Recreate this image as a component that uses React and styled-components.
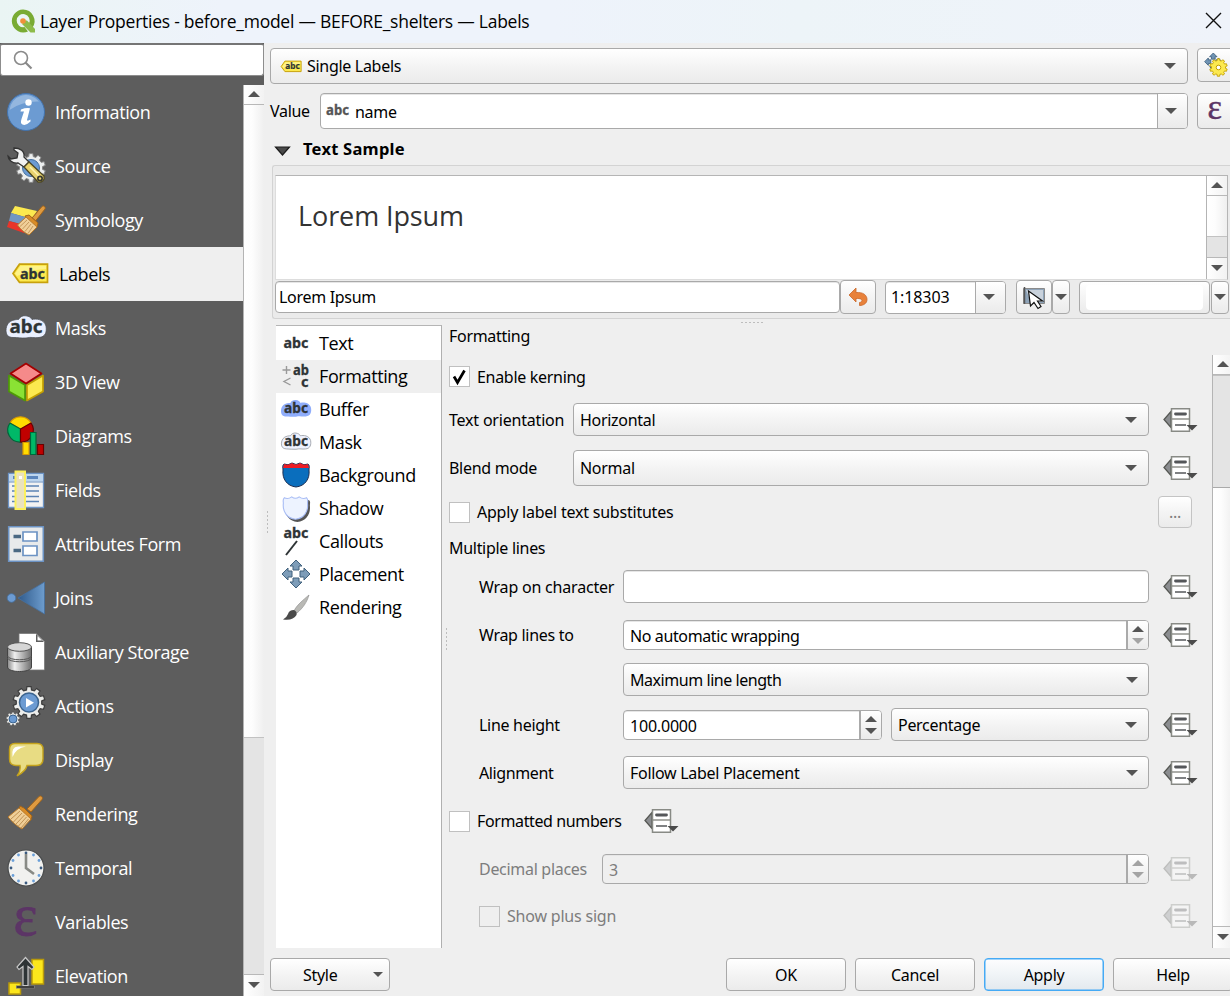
import React from "react";
import styled, { createGlobalStyle } from "styled-components";

const Global = createGlobalStyle`
  * { box-sizing: border-box; }
  html, body { margin: 0; width: 1230px; height: 996px; overflow: hidden; background: #efefef; }
  svg { display: block; flex: none; overflow: visible; }
`;

const ui = `"Noto Sans", "Open Sans", sans-serif`;
const segoe = `"Open Sans", "Noto Sans", sans-serif`;
const face = "linear-gradient(#ffffff, #f4f4f4 50%, #ebebeb)";

const Window = styled.div`
  width: 1230px;
  height: 996px;
  display: flex;
  flex-direction: column;
  overflow: hidden;
  background: #efefef;
  color: #000;
  font: 16px/20px ${ui};
  letter-spacing: -0.3px;
  white-space: nowrap;
`;
const TitleBar = styled.header`
  height: 43px;
  flex: none;
  display: flex;
  align-items: center;
  padding: 0 8px 2px 11px;
  background: linear-gradient(90deg, #eaf5f4 0, #eef3fb 18%, #eef3fb 45%, #edf4f8 65%, #eff3fa 100%);
  font-family: ${segoe};
  font-size: 17.5px;
  letter-spacing: -0.25px;
`;
const Title = styled.h1`
  margin: 0 auto 0 5px;
  font: inherit;
`;
const Body = styled.div`
  flex: 1;
  min-height: 0;
  display: flex;
`;

/* ---- sidebar ---- */
const Sidebar = styled.aside`
  width: 264px;
  flex: none;
  display: flex;
  flex-direction: column;
  background: #5d5d5d;
`;
const Search = styled.div`
  height: 33px;
  flex: none;
  margin: 0 0 9px;
  padding: 5px 12px;
  background: #fff;
  border: 1px solid #8d8d8d;
  border-top: 2px solid #757575;
  border-radius: 3px;
`;
const SideBody = styled.div`
  flex: 1;
  min-height: 0;
  display: flex;
`;
const NavList = styled.nav`
  width: 243px;
  overflow: hidden;
`;
const NavItem = styled.div`
  height: 54px;
  display: flex;
  align-items: center;
  gap: 9px;
  padding: 0 0 0 ${(p) => (p.$active ? 9 : 6)}px;
  background: ${(p) => (p.$active ? "#efefef" : "none")};
  color: ${(p) => (p.$active ? "#000" : "#fff")};
  font-family: ${segoe};
  font-size: 18px;
  letter-spacing: -0.4px;
`;
const IconBox = styled.span`
  width: ${(p) => p.$w}px;
  display: flex;
  justify-content: center;
  margin-top: ${(p) => p.$up || 0}px;
`;

/* ---- scroll bars ---- */
const Bar = styled.div`
  width: 21px;
  flex: none;
  display: flex;
  flex-direction: column;
  overflow: hidden;
  border-left: 1px solid #b4b4b4;
  background: linear-gradient(90deg, #fff, #fdfdfd 40%, #efefef);
`;
const BarArrow = styled.div`
  height: ${(p) => p.$h || 20}px;
  flex: none;
  display: flex;
  align-items: center;
  justify-content: center;
  padding-bottom: 1px;
  border: 0 solid #b8b8b8;
  border-width: ${(p) => (p.$down ? "1px 0 0" : "0 0 1px")};
  background: linear-gradient(90deg, #fff, #f2f2f2);
`;
const BarSpace = styled.div`
  flex: ${(p) => (p.$h ? "none" : 1)};
  height: ${(p) => (p.$h ? p.$h + "px" : "auto")};
`;
const Thumb = styled.div`
  height: ${(p) => p.$h}px;
  flex: none;
  background: #e4e4e4;
  border-top: 1px solid #c2c2c2;
  border-bottom: ${(p) => (p.$end ? "1px solid #aaa" : "0")};
`;

/* ---- controls ---- */
const Main = styled.main`
  flex: 1;
  min-width: 0;
  display: flex;
  flex-direction: column;
  padding: 5px 0 0 6px;
`;
const Line = styled.div`
  flex: none;
  display: flex;
  align-items: ${(p) => p.$align || "center"};
  height: ${(p) => p.$h}px;
  margin-top: ${(p) => p.$mt || 0}px;
  padding-left: ${(p) => p.$pl || 0}px;
  color: ${(p) => (p.$off ? "#7d7d7d" : "inherit")};
`;
const Frame = styled.div`
  flex: none;
  width: ${(p) => p.$w}px;
  height: ${(p) => p.$h || 33}px;
  margin-left: ${(p) => p.$ml || 0}px;
  display: flex;
  align-items: center;
  border: 1px solid ${(p) => (p.$soft ? "#c4c4c4" : "#a9a9a9")};
  border-radius: 4px;
  overflow: hidden;
`;
const Button = styled(Frame)`
  justify-content: ${(p) => p.$justify || "center"};
  padding: ${(p) => p.$pad || "0"};
  color: ${(p) => (p.$soft ? "#7d7d7d" : "inherit")};
  background: ${(p) => (p.$primary ? "linear-gradient(#fdfdfe, #f0f4f7 50%, #e3e9ee)" : face)};
  ${(p) => p.$primary && "border: 1px solid #45aaf5; box-shadow: inset 0 0 0 0.5px #45aaf5;"}
`;
const Combo = styled(Frame)`
  justify-content: space-between;
  padding: 0 ${(p) => p.$pr || 11}px 0 6px;
  background: ${face};
`;
const Field = styled(Frame)`
  padding-left: ${(p) => (p.$pl === undefined ? 6 : p.$pl)}px;
  background: ${(p) => (p.$off ? "#efefef" : "#fff")};
  box-shadow: inset 0 1px 0 #e6e6e6;
`;
const FieldText = styled.span`
  flex: 1;
  display: flex;
  align-items: center;
  gap: 5px;
  padding-top: ${(p) => p.$drop || 0}px;
  letter-spacing: ${(p) => (p.$ls !== undefined ? p.$ls + "px" : "inherit")};
`;
const FieldButton = styled.span`
  width: ${(p) => p.$w}px;
  align-self: stretch;
  display: flex;
  flex-direction: column;
  gap: 6px;
  align-items: center;
  justify-content: center;
  border-left: ${(p) => p.$line || 1}px solid #aaa;
  padding-right: ${(p) => (p.$line ? 0 : 3)}px;
  background: ${face};
`;
const Label = styled.span`
  width: ${(p) => (p.$w ? p.$w + "px" : "auto")};
  flex: none;
  letter-spacing: ${(p) => (p.$ls !== undefined ? p.$ls + "px" : "inherit")};
`;
const Box = styled.span`
  width: 21px;
  height: 21px;
  flex: none;
  margin-right: 7px;
  display: flex;
  align-items: center;
  justify-content: center;
  background: ${(p) => (p.$off ? "#efefef" : "#fff")};
  border: 1.5px solid #c0c0c0;
`;
const Heading = styled.h2`
  margin: 0 0 0 12px;
  font: bold 16.5px/20px ${ui};
  letter-spacing: 0.25px;
`;
const Sample = styled.section`
  flex: none;
  height: 154px;
  margin: 3px 0 0 2px;
  padding: 9px 0 0 2px;
  background: #ebebeb;
  border: 1px solid #d3d3d3;
  border-right: 0;
  border-radius: 3px 0 0 3px;
`;
const Preview = styled.div`
  height: 105px;
  width: 953px;
  display: flex;
  background: #fff;
  border: 1px solid #b5b5b5;
  border-bottom-color: #ddd;
  border-left-color: #ddd;
`;
const PreviewText = styled.div`
  flex: 1;
  padding: 20px 0 0 22px;
  font: 27px/40px ${segoe};
  letter-spacing: -0.1px;
  color: #333;
`;
const Swatch = styled.span`
  width: 117px;
  height: 25px;
  border-radius: 4px;
  background: #fff;
`;
const Split = styled.div`
  flex: none;
  height: 623px;
  margin-top: 6px;
  display: flex;
`;
const TabList = styled.div`
  width: 166px;
  margin-left: 6px;
  flex: none;
  padding-top: 1px;
  background: #fff;
  border-top: 1px solid #b5b5b5;
  border-right: 1px solid #b0b0b0;
`;
const Tab = styled.div`
  height: 33px;
  display: flex;
  align-items: center;
  gap: 8px;
  padding: 0 0 2px 5px;
  font-family: ${segoe};
  font-size: 18px;
  letter-spacing: -0.4px;
  background: ${(p) => (p.$active ? "#efefef" : "none")};
`;
const Form = styled.div`
  width: 764px;
  padding-left: 7px;
  margin-right: 6px;
  flex: none;
`;
const ScrollSlot = styled.div`
  flex: 1;
  padding-top: 30px;
  display: flex;
`;
const Override = styled.span`
  margin-left: ${(p) => (p.$ml === undefined ? 14 : p.$ml)}px;
  opacity: ${(p) => (p.$off ? 0.32 : 1)};
`;
const Footer = styled.footer`
  display: flex;
  gap: 9px;
  margin-top: 10px;
`;
const Push = styled.span`
  flex: none;
  width: 318px;
`;
const IconGap = styled.span`
  margin-left: 3px;
`;
const Dots = styled.div`
  width: ${(p) => (p.$row ? 25 : 3)}px;
  height: ${(p) => (p.$row ? 3 : 25)}px;
  background: radial-gradient(circle, #bdbdbd 0.8px, transparent 1px) 0 0 / ${(p) => (p.$row ? "4px 3px" : "3px 4px")};
`;
const Grip = styled.div`
  position: absolute;
  left: ${(p) => p.$x}px;
  top: ${(p) => p.$y}px;
`;

/* ---- glyphs ---- */
const Tri = ({ up, dim, w = 12 }) => (
  <svg width={w} height={w / 2} viewBox="0 0 12 6">
    <path d={up ? "M0 6 6 0 12 6Z" : "M0 0H12L6 6Z"} fill={dim ? "#a3a3a3" : "#545454"} />
  </svg>
);

const Abc = ({ x, y, size = 15, fill = "#2e3436", children = "abc", ...r }) => (
  <text x={x} y={y} fontFamily="Noto Sans, sans-serif" fontWeight="700" fontSize={size} fill={fill} stroke={fill} strokeWidth=".3" letterSpacing="0" {...r}>{children}</text>
);

const Gear = ({ cx, cy, r, n = 8, fill, stroke, sw = 1 }) => {
  const pts = [];
  for (let i = 0; i < n; i++) {
    const a = (i / n) * Math.PI * 2 - Math.PI / 2;
    const s = Math.PI / n;
    [[-0.62, 0.8], [-0.42, 1], [0.42, 1], [0.62, 0.8]].forEach(([k, m]) =>
      pts.push(`${(cx + Math.cos(a + s * k) * r * m).toFixed(2)},${(cy + Math.sin(a + s * k) * r * m).toFixed(2)}`)
    );
  }
  return <polygon points={pts.join(" ")} fill={fill} stroke={stroke} strokeWidth={sw} />;
};

const cloud = "M7 22.500C2 22.500 0 19.500 0 15.500C0 10 3 6 8 5C10 4.500 11.500 4.500 12.500 4.500C14 1.500 17 .3 20 .8C23 1.200 25 2.500 26 4.500C30 3.500 38 4 40 11C41 17 39.500 22 33 22.500C28 23.300 26 21.500 20 23C15 23.300 12 22.500 7 22.500Z";
const brushHandle = "M21 15 33 2.500C35 1 37.500 3.500 36 5.500L25 18Z";

const Brush = () => (
  <g>
    <path d={brushHandle} fill="#df9a40" stroke="#a0641a" />
    <path d="M14 12 18 14 26 22 25 26 20 28 11 19Z" fill="#d98c27" stroke="#a0641a" />
    <path d="M13 14 2 23C6 28 11 32 16 35L25 25Z" fill="#f0cf98" stroke="#b97b2c" />
    <path d="M14 17 5 25M16 19 7.500 28M18.500 21 10 30M20.500 23 12.500 32M22.500 25 15 34" stroke="#b98a4c" strokeWidth=".9" />
  </g>
);

const icons = {
  info: (
    <g>
      <circle cx="20" cy="20" r="18.500" fill="#6c9bd2" stroke="#4373ad" />
      <path d="M3.500 18A16.500 16.500 0 0 1 33 9.500Q16 9 3.500 18Z" fill="#a5c3e4" opacity=".7" />
      <circle cx="22.500" cy="10.500" r="3.200" fill="#fff" />
      <path d="M15 17.500Q20 15.500 24 16.200L21 28Q21.500 29.500 24.500 27.500L24.500 29.500Q20 34 16.500 32.500Q14 31.500 15.500 27L18 19.500L14.500 19.500Z" fill="#fff" />
    </g>
  ),
  source: (
    <g>
      <Gear cx={25} cy={22} r={14.500} n={10} fill="#eceeee" stroke="#888" />
      <circle cx="25" cy="22" r="8.500" fill="#6c9bd2" stroke="#45709f" />
      <path d="M2 10C2 13 6 18 12 17L18 21 23 16 18 11C19 5 14 2 8 2L8 4 12 7 11 12 5 13 2 10Z" fill="#f0f1f1" stroke="#333" strokeWidth="1.300" />
      <path d="M18 21 23 16 38 30C39 34 36 37 32 36Z" fill="#e9d36e" stroke="#4b4521" strokeWidth="1.300" />
      <path d="M24 21 34 31" stroke="#fff3b0" strokeWidth="1.500" />
      <circle cx="34" cy="32.500" r="3" fill="#3b3b30" /><circle cx="34" cy="32.500" r="1.200" fill="#e9d36e" />
    </g>
  ),
  symbology: (
    <g>
      <path d="M9 6 31 11 26 19 5 13Z" fill="#fce94f" />
      <path d="M5 13 26 19 22 26 3 21Z" fill="#7296c3" />
      <path d="M3 21 22 26 18 33 1 27Z" fill="#e8352b" />
      <g transform="translate(11 4)">
        <path d="M15 14 25 2.500C26.500 1 29 3 28 5L18.500 17Z" fill="#df9a40" stroke="#a0641a" />
        <path d="M8 12 12 11 21 19 20 23 14 27Z" fill="#d98c27" stroke="#a0641a" />
        <path d="M9 13 .5 21C4 26 8 29 12 31L20 23Z" fill="#f0cf98" stroke="#b97b2c" />
        <path d="M10 16 3 22.500M12 18 5.500 25M14 20 8 27.500M16 22 11 29.500" stroke="#b98a4c" strokeWidth=".8" />
      </g>
    </g>
  ),
  masks: (
    <g>
      <path d={cloud} transform="translate(0 7)" fill="#eaf0ff" stroke="#4c5055" strokeWidth=".8" />
      <Abc x="3.500" y="25" size="17.500" textLength="33" lengthAdjust="spacingAndGlyphs" />
    </g>
  ),
  cube: (
    <g strokeWidth="1.700" strokeLinejoin="round">
      <path d="M3 13.500 19 23V38.500L3 29.500Z" fill="#8ae234" stroke="#4e9a06" />
      <path d="M37 13.500 21 23V38.500L37 29.500Z" fill="#fce94f" stroke="#c4a000" />
      <path d="M20 1.500 35.500 11.500 20 21.500 4.500 11.500Z" fill="#f58a8a" stroke="#a40000" />
    </g>
  ),
  diagrams: (
    <g strokeWidth="1.200">
      <path d="M14.500 13 25 7A12 12 0 0 0 4 7Z" fill="#ffdc00" stroke="#d99a00" />
      <path d="M14.500 13V26A12 12 0 0 1 4 7Z" fill="#00b868" stroke="#00673a" />
      <path d="M14.500 13V26A12 12 0 0 0 25 7Z" fill="#c00000" stroke="#6a0000" />
      <path d="M17 26.500H23V38.500H17Z" fill="#ffdc00" stroke="#d99a00" />
      <path d="M24.500 16.500H30V38.500H24.500Z" fill="#00b868" stroke="#00673a" />
      <path d="M31.500 28.500H37.500V38.500H31.500Z" fill="#c00000" stroke="#6a0000" />
    </g>
  ),
  fields: (
    <g>
      <path d="M2.500 3.500H37.500V37.500H2.500Z" fill="#f2f2f2" stroke="#6c93c4" strokeWidth="1.300" />
      <path d="M3 4H37V11.500H3Z" fill="#bcd5ee" /><path d="M3 12H37" stroke="#6c93c4" />
      <path d="M21 7.500H32M7 7.500H9" stroke="#5b86bd" strokeWidth="3" />
      <path d="M6 16H33M6 21H33M6 26.500H33M6 31.500H33" stroke="#5b83b4" strokeWidth="1.500" />
      <path d="M9.500 1.500H19V39H9.500Z" fill="#eae2bd" stroke="#fcf15c" strokeWidth="2" />
      <path d="M13 6H16V9H13Z" fill="#fff" />
    </g>
  ),
  form: (
    <g>
      <path d="M2.700 2.700H37.300V37.300H2.700Z" fill="#e8eaeb" stroke="#6c93c4" strokeWidth="1.600" />
      <path d="M17 8H31V17H17ZM17 22H31V31.500H17Z" fill="#fff" stroke="#6c93c4" strokeWidth="1.700" />
      <path d="M7.500 12.500H15M7.500 26.500H15" stroke="#4b6983" strokeWidth="3.500" />
    </g>
  ),
  joins: (
    <g>
      <defs><linearGradient id="jn"><stop offset="0" stopColor="#2f5a8b" /><stop offset="1" stopColor="#6d9ccd" /></linearGradient></defs>
      <circle cx="5.500" cy="20" r="4.300" fill="#6c9bd2" stroke="#45709f" strokeWidth=".8" />
      <path d="M12 20 38.500 4V36Z" fill="url(#jn)" stroke="#45709f" strokeWidth=".8" />
    </g>
  ),
  storage: (
    <g>
      <defs><linearGradient id="cyl"><stop offset="0" stopColor="#888" /><stop offset=".3" stopColor="#f0f0f0" /><stop offset="1" stopColor="#6e6e6e" /></linearGradient></defs>
      <path d="M13 1.500H30L38.500 9.500V38H13Z" fill="#fff" stroke="#777" strokeWidth=".8" />
      <path d="M30 2V10H38Z" fill="#5d5d5d" /><path d="M31.500 4V8.500H36Z" fill="#fff" />
      <path d="M1.500 15V35C1.500 41 25.500 41 25.500 35V15Z" fill="url(#cyl)" stroke="#444" />
      <ellipse cx="13.500" cy="15" rx="12" ry="4.300" fill="#d6d6d6" stroke="#555" />
      <path d="M1.500 24C3 29 24 29 25.500 24M1.500 26C3 31 24 31 25.500 26" fill="none" stroke="#555" />
    </g>
  ),
  actions: (
    <g>
      <Gear cx={23} cy={16.500} r={16} n={10} fill="#ecedeb" stroke="#3c3c3c" sw="1.200" />
      <circle cx="23" cy="16.500" r="9.500" fill="#6c9bd2" stroke="#3b648f" strokeWidth="1.500" />
      <path d="M20 12 28 16.700 20 21.500Z" fill="#fff" />
      <Gear cx={7} cy={33} r={7} n={9} fill="#ecedeb" stroke="#555" sw=".7" />
      <circle cx="7" cy="33" r="4" fill="#6c9bd2" stroke="#3b648f" />
    </g>
  ),
  display: (
    <g>
      <path d="M9 3.500H31Q37 3.500 37 9.500V19Q37 25.500 30 25.500H21Q20 31 11 36Q15 31 14 25.500H10Q3.500 25.500 3.500 19V9Q3.500 3.500 9 3.500Z" fill="#e8dc83" stroke="#c4a21c" strokeWidth="1.400" />
      <path d="M6.500 17Q5 6.500 12 6.500H20Q10 8 6.500 17Z" fill="#fff" />
    </g>
  ),
  render: <Brush />,
  temporal: (
    <g>
      <circle cx="20" cy="20" r="18" fill="#f1f1ef" stroke="#4b4d4e" strokeWidth="1.200" />
      {[...Array(12)].map((_, i) => (
        <circle key={i} cx={20 + 15 * Math.sin((i * Math.PI) / 6)} cy={20 - 15 * Math.cos((i * Math.PI) / 6)} r="1.400" fill={i % 3 ? "#6a9fd8" : "#3a5a80"} />
      ))}
      <path d="M20 6V20L28 26" fill="none" stroke="#888a85" strokeWidth="2.600" />
    </g>
  ),
  epsilon: (
    <text x="7.500" y="33" fontFamily="Liberation Serif, serif" fontSize="60" fill="#5c3566" stroke="#5c3566" strokeWidth=".8" letterSpacing="0" textLength="24" lengthAdjust="spacingAndGlyphs">ε</text>
  ),
  elevation: (
    <g>
      <path d="M26 3.500H37.500V28H26ZM3 27H14.500V38H3Z" fill="#fce61c" stroke="#b99a0a" strokeWidth="1.500" />
      <path d="M10 31H29" stroke="#777" strokeWidth="3" /><path d="M11 31H28" stroke="#222" strokeWidth="1.300" />
      <path d="M19.500 1.500 11 11 13 13.500 17 10.500V29.500H22V10.500L26 13.500 28 11Z" fill="#2e3436" stroke="#c8c8c8" strokeWidth="1.200" />
    </g>
  ),
};

const TagIcon = ({ w = 38, h = 21 }) => (
  <svg width={w} height={h} viewBox="0 0 38 21">
    <path d="M2 10.500 8.500 1.200H36.500V19.300H8.500Z" fill="#fce94f" stroke="#c8a10c" strokeWidth="1.700" />
    <path d="M4 10.500 9.500 3H35V6Q18 7 6 13Z" fill="#fff6a0" opacity=".7" />
    <Abc x="9" y="15.500" size="14.500" textLength="25" lengthAdjust="spacingAndGlyphs" />
  </svg>
);

const move = "M15 0 21 6H18V10H12V6H9ZM15 28 9 22H12V18H18V22H21ZM1 14 7 8V11H11V17H7V20ZM29 14 23 20V17H19V11H23V8Z";
const shield = "M2 9C2 6 1 5 3 3Q7 5 11 2Q15 5 19 2Q23 5 27 3C29 5 28 6 28 9C29 18 24 25 15 26C6 25 1 18 2 9Z";

const tabs = {
  Text: <Abc x="2.500" y="19" size="15" textLength="25" lengthAdjust="spacingAndGlyphs" />,
  Formatting: (
    <g>
      <Abc x="12" y="12.500" size="14.500" textLength="16" lengthAdjust="spacingAndGlyphs">ab</Abc>
      <Abc x="20" y="24.500" size="14.500">c</Abc>
      <path d="M1.500 8H9.500M5.500 4V12M9.500 16 3 19.500 9.500 23" stroke="#999" strokeWidth="1.400" fill="none" />
    </g>
  ),
  Buffer: (
    <g>
      <path d={cloud} transform="translate(0 4.500) scale(.75 .75)" fill="#8fadfb" />
      <Abc x="3" y="18" size="13.500" textLength="24" lengthAdjust="spacingAndGlyphs" />
    </g>
  ),
  Mask: (
    <g>
      <path d={cloud} transform="translate(.4 4.500) scale(.73 .73)" fill="#eef2ff" stroke="#8b8f96" />
      <Abc x="3" y="18" size="13.500" textLength="24" lengthAdjust="spacingAndGlyphs" />
    </g>
  ),
  Background: (
    <g>
      <path d={shield} fill="#0a6ebd" stroke="#1c2d50" />
      <path d="M3 3Q7 5 11 2Q15 5 19 2Q23 5 27 3L28 7H2Z" fill="#ee1c24" />
    </g>
  ),
  Shadow: (
    <g>
      <path d={shield} transform="translate(2 3) scale(.96)" fill="#555" />
      <path d={shield} transform="translate(.5 1) scale(.93)" fill="#edf3ff" stroke="#a9bdf5" strokeWidth="1.200" />
    </g>
  ),
  Callouts: (
    <g>
      <Abc x="2.500" y="11" size="15" textLength="25" lengthAdjust="spacingAndGlyphs" />
      <path d="M5 28 16 14" stroke="#2e3436" strokeWidth="2" />
    </g>
  ),
  Placement: <path d={move} fill="#7d9cb8" stroke="#41617d" />,
  Rendering: (
    <g>
      <path d="M28 2C22 7 15 13 13 18L16 20C22 15 26 9 28 2Z" fill="#b9b9b5" stroke="#888" strokeWidth=".6" />
      <path d="M13 17Q8 17 7 21Q5.500 25 2 26.500Q12 28 15.500 22Q16.500 19 13 17Z" fill="#4a4a4a" />
    </g>
  ),
};

const OverrideIcon = () => (
  <svg width="35" height="26" viewBox="0 0 35 26">
    <path d="M8 4.500V20.500L1 12.500Z" fill="#8b8d90" stroke="#555753" strokeWidth="1.300" />
    <path d="M8.500 1.700H26.500V24.300H8.500Z" fill="#fff" stroke="#888a85" strokeWidth="1.500" />
    <path d="M8.500 12H26.500" stroke="#888a85" strokeWidth="1.400" />
    <path d="M12.500 7H22.500" stroke="#55575a" strokeWidth="2.800" strokeLinecap="round" />
    <path d="M12 18H23" stroke="#55575a" strokeWidth="1.500" />
    <path d="M23.500 18H34.500L29 23.500Z" fill="#4b4b4b" />
  </svg>
);

const nav = [
  ["info", "Information"],
  ["source", "Source"],
  ["symbology", "Symbology"],
  [null, "Labels"],
  ["masks", "Masks"],
  ["cube", "3D View"],
  ["diagrams", "Diagrams"],
  ["fields", "Fields"],
  ["form", "Attributes Form"],
  ["joins", "Joins"],
  ["storage", "Auxiliary Storage"],
  ["actions", "Actions"],
  ["display", "Display"],
  ["render", "Rendering"],
  ["temporal", "Temporal"],
  ["epsilon", "Variables"],
  ["elevation", "Elevation"],
];

const DD = (p) => (
  <Override $off={p.off} $ml={p.ml}><OverrideIcon /></Override>
);
const Select = ({ w, h, ml, pr, children }) => (
  <Combo $w={w} $h={h} $ml={ml} $pr={pr}>{children}<Tri /></Combo>
);
const Spin = ({ w, off, dimDown, ls, children }) => (
  <Field $w={w} $h={30} $off={off}>
    <FieldText $ls={ls} $drop={2}>{children}</FieldText>
    <FieldButton $w={22} $line={2}><Tri up dim={off} /><Tri dim={off || dimDown} /></FieldButton>
  </Field>
);

export default function App() {
  return (
    <Window>
      <Global />
      <TitleBar>
        <svg width="24" height="24" viewBox="0 0 24 24">
          <path d="M12 .5A11.500 11.500 0 1 0 17 22.500L13.500 18A6.500 6.500 0 1 1 18 14.500L21.500 18.500A11.500 11.500 0 0 0 12 .5Z" fill="#79ab34" />
          <path d="M11.500 11.500H16L24 20V23.500H19.500L11.500 15.500Z" fill="#8dbb4a" />
          <circle cx="12" cy="12" r="2.800" fill="#f0913a" />
        </svg>
        <Title>Layer Properties - before_model — BEFORE_shelters — Labels</Title>
        <svg width="17" height="17" viewBox="0 0 17 17"><path d="M1 1 16 16M16 1 1 16" stroke="#111" strokeWidth="1.400" /></svg>
      </TitleBar>
      <Body>
        <Sidebar>
          <Search>
            <svg width="20" height="20" viewBox="0 0 20 20" fill="none" stroke="#8a8a8a">
              <circle cx="8" cy="8" r="6.500" strokeWidth="1.600" /><path d="M12.500 12.500 18.500 18.500" strokeWidth="2.200" />
            </svg>
          </Search>
          <SideBody>
            <NavList>
              {nav.map(([icon, label]) => (
                <NavItem key={label} $active={!icon}>
                  <IconBox $w={icon ? 40 : 41} $up={icon ? 0 : -2}>
                    {icon ? <svg width="40" height="40" viewBox="0 0 40 40">{icons[icon]}</svg> : <TagIcon />}
                  </IconBox>
                  {label}
                </NavItem>
              ))}
            </NavList>
            <Bar>
              <BarArrow><Tri up /></BarArrow>
              <BarSpace />
              <Thumb $h={237} />
              <BarArrow $down $h={22}><Tri /></BarArrow>
            </Bar>
          </SideBody>
        </Sidebar>

        <Main>
          <Line $h={36} $align="flex-start">
            <Combo $w={918} $h={36}>
              <FieldText><IconGap><TagIcon w={22} h={13} /></IconGap>Single Labels</FieldText><Tri />
            </Combo>
            <Button $w={40} $h={34} $ml={9} $justify="flex-start" $pad="0 0 0 6px">
              <svg width="24" height="24" viewBox="0 0 24 24">
                <path d={move} transform="scale(.62)" fill="#6f93b3" stroke="#3b5c7a" strokeWidth="1.300" />
                <Gear cx={14.500} cy={14.500} r={8.800} n={10} fill="#fce94f" stroke="#c4a000" sw=".9" />
                <circle cx="14.500" cy="14.500" r="2.300" fill="#fff" stroke="#c4a000" />
              </svg>
            </Button>
          </Line>
          <Line $h={36} $mt={9}>
            <Label $w={50}>Value</Label>
            <Field $w={868} $h={36} $pl={5}>
              <FieldText $drop={1}>
                <svg width="24" height="18" viewBox="0 0 24 18"><Abc x="0" y="12" size="14" fill="#555" textLength="23" lengthAdjust="spacingAndGlyphs" /></svg>
                name
              </FieldText>
              <FieldButton $w={30}><Tri /></FieldButton>
            </Field>
            <Button $w={40} $h={36} $ml={9} $justify="flex-start" $pad="0 0 0 5px">
              <svg width="24" height="24" viewBox="0 0 40 40">{icons.epsilon}</svg>
            </Button>
          </Line>
          <Line $h={24} $mt={8} $pl={4}>
            <svg width="17" height="12" viewBox="0 0 17 12"><path d="M1.500 4H15.500L8.500 12Z" fill="#4a4a4a" stroke="#1c1c1c" strokeWidth="1.200" /></svg>
            <Heading>Text Sample</Heading>
          </Line>
          <Line $h={1} />
          <Sample>
            <Preview>
              <PreviewText>Lorem Ipsum</PreviewText>
              <Bar>
                <BarArrow><Tri up /></BarArrow>
                <BarSpace $h={40} />
                <Thumb $h={21} />
                <BarArrow $down $h={22}><Tri /></BarArrow>
              </Bar>
            </Preview>
            <Line $h={34}>
              <Field $w={565} $h={32} $pl={3}><FieldText>Lorem Ipsum</FieldText></Field>
              <Button $w={36} $h={34}>
                <svg width="20" height="20" viewBox="0 0 20 20"><path d="M1 8 8 1V5.500C15 5 19 8 19 12.500C19 16 16 18.500 11.500 18.500V15.500C15 15 15.500 11 8 11.500V15Z" fill="#e8813a" stroke="#c9672a" strokeWidth=".8" /></svg>
              </Button>
              <Field $w={121} $h={33} $ml={9} $pl={5}>
                <FieldText $ls={-0.1}>1:18303</FieldText>
                <FieldButton $w={30}><Tri /></FieldButton>
              </Field>
              <Button $w={36} $h={34} $ml={10}>
                <svg width="24" height="24" viewBox="0 0 24 24">
                  <path d="M1.500 3.500H22.500V18.500H1.500Z" fill="#8ea3b8" stroke="#8a8a8a" /><path d="M4 5H21V17H9Z" fill="#c9d2dc" />
                  <path d="M2.500 2V19" stroke="#555" strokeWidth="1.500" />
                  <path d="M6.500 6 8.500 21 12 17.500 16 23.500 19 21.500 15.500 16H20.500Z" fill="#fff" stroke="#111" strokeWidth="1.200" />
                </svg>
              </Button>
              <Button $w={18} $h={34}><Tri /></Button>
              <Button $w={131} $h={33} $ml={9}><Swatch /></Button>
              <Button $w={18} $h={33} $ml={1}><Tri /></Button>
            </Line>
          </Sample>

          <Split>
            <TabList>
              {Object.keys(tabs).map((t) => (
                <Tab key={t} $active={t === "Formatting"}>
                  <svg width="30" height="28" viewBox="0 0 30 28">{tabs[t]}</svg>{t}
                </Tab>
              ))}
            </TabList>
            <Form>
              <Line $h={22}>Formatting</Line>
              <Line $h={21} $mt={19}>
                <Box><svg width="17" height="17" viewBox="0 0 17 17"><path d="M3 8.500 6.500 14.500 13.500 2.500" fill="none" stroke="#000" strokeWidth="2.700" /></svg></Box>
                Enable kerning
              </Line>
              <Line $h={33} $mt={16}>
                <Label $w={124} $ls={-0.2}>Text orientation</Label>
                <Select w={576}>Horizontal</Select><DD />
              </Line>
              <Line $h={36} $mt={14}>
                <Label $w={124}>Blend mode</Label>
                <Select w={576} h={36}>Normal</Select><DD />
              </Line>
              <Line $h={32} $mt={10}>
                <Box /><Label $w={681} $ls={-0.22}>Apply label text substitutes</Label>
                <Button $w={34} $h={32} $soft>...</Button>
              </Line>
              <Line $h={22} $mt={9}>Multiple lines</Line>
              <Line $h={33} $mt={11} $pl={30}>
                <Label $w={144} $ls={-0.2}>Wrap on character</Label><Field $w={526} $h={33} /><DD />
              </Line>
              <Line $h={30} $mt={17} $pl={30}>
                <Label $w={144}>Wrap lines to</Label><Spin w={526} dimDown ls={-0.38}>No automatic wrapping</Spin><DD />
              </Line>
              <Line $h={33} $mt={13} $pl={174}><Select w={526} pr={10}><Label $ls={-0.45}>Maximum line length</Label></Select></Line>
              <Line $h={33} $mt={12} $pl={30}>
                <Label $w={144}>Line height</Label><Spin w={259} ls={-0.2}>100.0000</Spin>
                <Select w={258} ml={9}>Percentage</Select><DD />
              </Line>
              <Line $h={33} $mt={15} $pl={30}>
                <Label $w={144} $ls={-0.4}>Alignment</Label><Select w={526} pr={10}>Follow Label Placement</Select><DD />
              </Line>
              <Line $h={22} $mt={21}><Box /><Label $w={144} $ls={-0.38}>Formatted numbers</Label><DD ml={23} /></Line>
              <Line $h={30} $mt={22} $pl={30} $off>
                <Label $w={123}>Decimal places</Label><Spin w={547} off>3</Spin><DD off />
              </Line>
              <Line $h={22} $mt={21} $pl={30} $off>
                <Box $off /><Label $w={642} $ls={-0.2}>Show plus sign</Label><DD off />
              </Line>
            </Form>
            <ScrollSlot>
              <Bar>
                <BarArrow><Tri up /></BarArrow>
                <Thumb $h={113} $end />
                <BarSpace />
                <BarArrow $down $h={22}><Tri /></BarArrow>
              </Bar>
            </ScrollSlot>
          </Split>

          <Footer>
            <Button $w={120} $pad="0 6px 0 32px" $justify="space-between">Style<Tri w={10} /></Button>
            <Push />
            <Button $w={120}>OK</Button>
            <Button $w={120}>Cancel</Button>
            <Button $w={120} $primary>Apply</Button>
            <Button $w={120}>Help</Button>
          </Footer>
        </Main>
      </Body>
      <Grip $x={740} $y={321}><Dots $row /></Grip>
      <Grip $x={266} $y={510}><Dots /></Grip>
      <Grip $x={445} $y={627}><Dots /></Grip>
    </Window>
  );
}
